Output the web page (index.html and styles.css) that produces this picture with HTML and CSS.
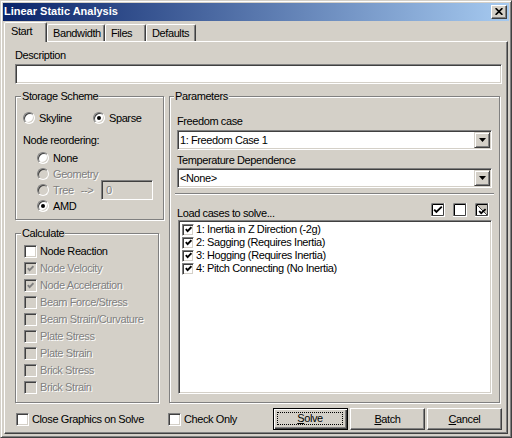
FILE: index.html
```html
<!DOCTYPE html>
<html>
<head>
<meta charset="utf-8">
<title>Linear Static Analysis</title>
<link rel="stylesheet" href="styles.css">
</head>
<body>
<div class="window">
  <div class="titlebar">
    <span class="title">Linear Static Analysis</span>
    <span class="close"><svg width="8" height="7" viewBox="0 0 8 7"><path d="M0.6 0.2L7.4 6.8M7.4 0.2L0.6 6.8" stroke="#000" stroke-width="1.7" fill="none"/></svg></span>
  </div>
  <div class="tabs">
    <div class="tab sel t-start">Start</div>
    <div class="tab t-band">Bandwidth</div>
    <div class="tab t-files">Files</div>
    <div class="tab t-def">Defaults</div>
  </div>
  <div class="panel">
    <div class="lbl">Description</div>
    <div class="field desc"></div>
    <div class="main">
      <div class="leftcol">
        <fieldset class="grp storage">
          <legend>Storage Scheme</legend>
          <div class="body-storage">
            <div class="r16">
              <span class="opt w70"><span class="radio"></span>Skyline</span>
              <span class="opt"><span class="radio on"></span>Sparse</span>
            </div>
            <div class="lbl mt8">Node reordering:</div>
            <div class="indent">
              <div class="r16"><span class="radio"></span>None</div>
              <div class="r16 dis"><span class="radio off"></span>Geometry</div>
              <div class="r16 dis"><span class="radio off"></span><span>Tree</span><span class="arrow">--&gt;</span><span class="field small dis">0</span></div>
              <div class="r16"><span class="radio on"></span>AMD</div>
            </div>
          </div>
        </fieldset>
        <fieldset class="grp calc">
          <legend>Calculate</legend>
          <div class="body-calc">
            <div class="r17"><span class="chk"></span>Node Reaction</div>
            <div class="r17 dis"><span class="chk off"><svg width="7" height="7" viewBox="0 0 7 7"><path d="M0.8 3.2L2.6 5.2L6.4 1.2" stroke="#808080" stroke-width="1.8" fill="none"/></svg></span>Node Velocity</div>
            <div class="r17 dis"><span class="chk off"><svg width="7" height="7" viewBox="0 0 7 7"><path d="M0.8 3.2L2.6 5.2L6.4 1.2" stroke="#808080" stroke-width="1.8" fill="none"/></svg></span>Node Acceleration</div>
            <div class="r17 dis"><span class="chk off"></span>Beam Force/Stress</div>
            <div class="r17 dis"><span class="chk off"></span>Beam Strain/Curvature</div>
            <div class="r17 dis"><span class="chk off"></span>Plate Stress</div>
            <div class="r17 dis"><span class="chk off"></span>Plate Strain</div>
            <div class="r17 dis"><span class="chk off"></span>Brick Stress</div>
            <div class="r17 dis"><span class="chk off"></span>Brick Strain</div>
          </div>
        </fieldset>
      </div>
      <fieldset class="grp params">
        <legend>Parameters</legend>
        <div class="body-params">
          <div class="lbl">Freedom case</div>
          <div class="field combo"><span class="combo-text">1: Freedom Case 1</span><span class="drop"><svg width="7" height="4" viewBox="0 0 7 4"><path d="M0 0H7L3.5 4Z" fill="#000"/></svg></span></div>
          <div class="lbl mt4">Temperature Dependence</div>
          <div class="field combo mt1"><span class="combo-text">&lt;None&gt;</span><span class="drop"><svg width="7" height="4" viewBox="0 0 7 4"><path d="M0 0H7L3.5 4Z" fill="#000"/></svg></span></div>
          <div class="sep"></div>
          <div class="loadrow">
            <span class="loadlbl">Load cases to solve...</span>
            <span class="icons">
              <svg width="14" height="14" viewBox="0 0 14 14"><rect width="14" height="14" fill="#fff"/><path d="M0.5 14V0.5H14" stroke="#808080" fill="none"/><path d="M1.5 13V1.5H13" stroke="#000" fill="none"/><path d="M0 13.5H13.5V0" stroke="#fff" fill="none"/><path d="M1 12.5H12.5V1" stroke="#404040" fill="none"/><path d="M3.2 6.6L5.4 9L10.8 3.6" stroke="#000" stroke-width="1.9" fill="none"/></svg>
              <svg width="14" height="14" viewBox="0 0 14 14"><rect width="14" height="14" fill="#fff"/><path d="M0.5 14V0.5H14" stroke="#808080" fill="none"/><path d="M1.5 13V1.5H13" stroke="#000" fill="none"/><path d="M0 13.5H13.5V0" stroke="#fff" fill="none"/><path d="M1 12.5H12.5V1" stroke="#404040" fill="none"/></svg>
              <svg width="14" height="14" viewBox="0 0 14 14"><rect width="14" height="14" fill="#fff"/><path d="M2 2H12V12Z" fill="#C8C4BC"/><path d="M2 2L12 12" stroke="#404040" fill="none"/><path d="M0.5 14V0.5H14" stroke="#808080" fill="none"/><path d="M1.5 13V1.5H13" stroke="#000" fill="none"/><path d="M0 13.5H13.5V0" stroke="#fff" fill="none"/><path d="M1 12.5H12.5V1" stroke="#404040" fill="none"/><path d="M4.2 8L6.2 10.2L10.6 6.2" stroke="#000" stroke-width="1.8" fill="none"/></svg>
            </span>
          </div>
          <div class="field list">
            <div class="li"><span class="chk sm"><svg width="7" height="7" viewBox="0 0 7 7"><path d="M0.8 3.2L2.6 5.2L6.4 1.2" stroke="#000" stroke-width="1.8" fill="none"/></svg></span>1: Inertia in Z Direction (-2g)</div>
            <div class="li"><span class="chk sm"><svg width="7" height="7" viewBox="0 0 7 7"><path d="M0.8 3.2L2.6 5.2L6.4 1.2" stroke="#000" stroke-width="1.8" fill="none"/></svg></span>2: Sagging (Requires Inertia)</div>
            <div class="li"><span class="chk sm"><svg width="7" height="7" viewBox="0 0 7 7"><path d="M0.8 3.2L2.6 5.2L6.4 1.2" stroke="#000" stroke-width="1.8" fill="none"/></svg></span>3: Hogging (Requires Inertia)</div>
            <div class="li"><span class="chk sm"><svg width="7" height="7" viewBox="0 0 7 7"><path d="M0.8 3.2L2.6 5.2L6.4 1.2" stroke="#000" stroke-width="1.8" fill="none"/></svg></span>4: Pitch Connecting (No Inertia)</div>
          </div>
        </div>
      </fieldset>
    </div>
    <div class="bottom">
      <div class="cb1"><span class="chk"></span>Close Graphics on Solve</div>
      <div class="cb2"><span class="chk"></span>Check Only</div>
      <div class="btns">
        <div class="btn def"><span class="focus"><u>S</u>olve</span></div>
        <div class="btn"><u>B</u>atch</div>
        <div class="btn"><u>C</u>ancel</div>
      </div>
    </div>
  </div>
</div>
</body>
</html>
```
FILE: styles.css
```css
* { box-sizing: border-box; }
html, body { margin: 0; padding: 0; }
body {
  width: 512px;
  height: 438px;
  overflow: hidden;
  background: #D4D0C8;
  font-family: "Liberation Sans", Arial, sans-serif;
  font-size: 11px;
  line-height: 13px;
  letter-spacing: -0.4px;
  color: #000;
}
.window {
  width: 512px;
  height: 438px;
  background: #D4D0C8;
  border: 1px solid;
  border-color: #D4D0C8 #404040 #404040 #D4D0C8;
  box-shadow: inset 1px 1px 0 #fff, inset -1px -1px 0 #808080;
  padding: 2px;
  display: flex;
  flex-direction: column;
}
.titlebar {
  height: 18px;
  flex: none;
  background: linear-gradient(to right, #0A246A, #A6CAF0);
  display: flex;
  align-items: center;
  justify-content: space-between;
  padding: 0 2px 1px 1px;
  color: #fff;
}
.title { font-weight: bold; letter-spacing: 0; }
.close {
  width: 16px;
  height: 14px;
  margin-top: 1px;
  background: #D4D0C8;
  border: 1px solid;
  border-color: #fff #404040 #404040 #fff;
  box-shadow: inset -1px -1px 0 #808080;
  display: flex;
  align-items: center;
  justify-content: center;
  padding: 0 1px 1px 0;
}
.tabs {
  display: flex;
  align-items: flex-end;
  height: 20px;
  flex: none;
  margin-top: 1px;
  padding-left: 1px;
  position: relative;
  z-index: 1;
}
.tab {
  height: 17px;
  margin-bottom: 1px;
  padding: 2px 0 0 5px;
  border: 1px solid;
  border-bottom: none;
  border-color: #fff #404040 transparent #fff;
  border-radius: 2px 2px 0 0;
  box-shadow: inset -1px 0 0 #808080;
  background: #D4D0C8;
  white-space: nowrap;
}
.tab.sel { height: 20px; margin-bottom: 0; padding-left: 6px; }
.t-start { width: 43px; }
.t-band { width: 58px; }
.t-files { width: 41px; }
.t-def { width: 50px; }
.panel {
  flex: 1;
  margin: -1px 1px 1px 1px;
  border: 1px solid;
  border-color: #fff #404040 #404040 #fff;
  box-shadow: inset -1px -1px 0 #808080;
  padding: 7px 5px 3px 10px;
  display: flex;
  flex-direction: column;
}
.lbl { height: 13px; white-space: nowrap; }
.mt8 { margin-top: 8px; }
.mt4 { margin-top: 4px; }
.mt1 { margin-top: 1px !important; }
.field {
  background: #fff;
  border: 1px solid;
  border-color: #808080 #fff #fff #808080;
  box-shadow: inset 1px 1px 0 #404040, inset -1px -1px 0 #D4D0C8;
}
.desc { height: 20px; margin-top: 2px; flex: none; }
.main {
  display: flex;
  margin-top: 6px;
  gap: 5px;
  padding-right: 2px;
}
.leftcol {
  width: 149px;
  flex: none;
  display: flex;
  flex-direction: column;
  align-items: flex-start;
}
.grp {
  margin: 0;
  padding: 0;
  min-width: 0;
  border: 1px solid #808080;
  box-shadow: inset 1px 1px 0 #fff, 1px 1px 0 #fff;
}
.grp legend {
  margin-left: 5px;
  padding: 0 1px;
  background: #D4D0C8;
  line-height: 13px;
  white-space: nowrap;
}
.params legend { margin-left: 4px; }
.storage { width: 149px; }
.leftcol .calc { width: 144px; margin-top: 7px; }
.params { flex: 1; display: flex; flex-direction: column; }
.body-storage { padding: 7px 0 5px 7px; }
.body-calc { padding: 3px 0 6px 8px; }
.body-params {
  flex: 1;
  display: flex;
  flex-direction: column;
  padding: 12px 7px 8px 7px;
}
.r16 { height: 16px; display: flex; align-items: center; white-space: nowrap; }
.r17 { height: 17px; display: flex; align-items: center; white-space: nowrap; }
.opt { display: flex; align-items: center; }
.w70 { width: 70px; }
.indent { margin-top: 3px; padding-left: 14px; }
.dis { color: #808080; text-shadow: 1px 1px 0 #fff; }
.radio {
  width: 12px;
  height: 12px;
  flex: none;
  margin-right: 4px;
  border-radius: 50%;
  background: #fff;
  border: 1px solid;
  border-color: #808080 #fff #fff #808080;
  box-shadow: inset 1px 1px 0 #404040, inset -1px -1px 0 #D4D0C8;
  position: relative;
}
.radio.off { background: #D4D0C8; }
.radio.on::after {
  content: "";
  position: absolute;
  left: 3px;
  top: 3px;
  width: 4px;
  height: 4px;
  border-radius: 50%;
  background: #000;
}
.arrow { margin-left: 7px; }
.small {
  width: 52px;
  height: 20px;
  margin: -2px 10px -2px auto;
  padding: 3px 0 0 4px;
  background: #D4D0C8;
}
.chk {
  width: 13px;
  height: 13px;
  flex: none;
  margin-right: 3px;
  display: flex;
  align-items: center;
  justify-content: center;
  background: #fff;
  border: 1px solid;
  border-color: #808080 #fff #fff #808080;
  box-shadow: inset 1px 1px 0 #404040, inset -1px -1px 0 #D4D0C8;
}
.chk.off { background: #D4D0C8; }
.chk svg { display: block; }
.combo {
  height: 20px;
  margin-top: 2px;
  flex: none;
  display: flex;
  align-items: center;
  padding: 1px;
}
.combo-text { flex: 1; padding-left: 1px; white-space: nowrap; }
.drop {
  width: 16px;
  height: 16px;
  flex: none;
  background: #D4D0C8;
  border: 1px solid;
  border-color: #D4D0C8 #404040 #404040 #D4D0C8;
  box-shadow: inset 1px 1px 0 #fff, inset -1px -1px 0 #808080;
  display: flex;
  align-items: center;
  justify-content: center;
}
.drop svg { display: block; }
.sep {
  height: 2px;
  flex: none;
  margin: 5px -2px 0 -2px;
  border-top: 1px solid #808080;
  border-bottom: 1px solid #fff;
}
.loadrow {
  display: flex;
  justify-content: space-between;
  height: 17px;
  flex: none;
  margin-top: 8px;
}
.loadlbl { align-self: flex-end; white-space: nowrap; }
.icons { display: flex; gap: 8px; margin-right: 3px; align-self: flex-start; }
.icons svg { display: block; }
.list {
  flex: 1;
  margin-left: 1px;
  padding: 2px 2px 2px 3px;
}
.li { height: 13px; display: flex; align-items: center; white-space: nowrap; }
.chk.sm { width: 12px; height: 12px; margin-right: 2px; }
.bottom {
  display: flex;
  align-items: center;
  height: 22px;
  flex: none;
  margin-top: 5px;
}
.cb1 { margin-left: 1px; width: 152px; display: flex; align-items: center; white-space: nowrap; }
.cb2 { display: flex; align-items: center; white-space: nowrap; }
.btns { margin-left: auto; display: flex; gap: 2px; }
.btn {
  width: 75px;
  height: 22px;
  background: #D4D0C8;
  border: 1px solid;
  border-color: #fff #404040 #404040 #fff;
  box-shadow: inset -1px -1px 0 #808080;
  display: flex;
  align-items: center;
  justify-content: center;
}
.btn.def {
  border-color: #000;
  box-shadow: inset 1px 1px 0 #fff, inset -1px -1px 0 #404040, inset -2px -2px 0 #808080;
  padding: 3px 4px 4px 3px;
}
.focus {
  flex: 1;
  align-self: stretch;
  border: 1px dotted #000;
  display: flex;
  align-items: center;
  justify-content: center;
}
u { text-decoration: underline; }
```
